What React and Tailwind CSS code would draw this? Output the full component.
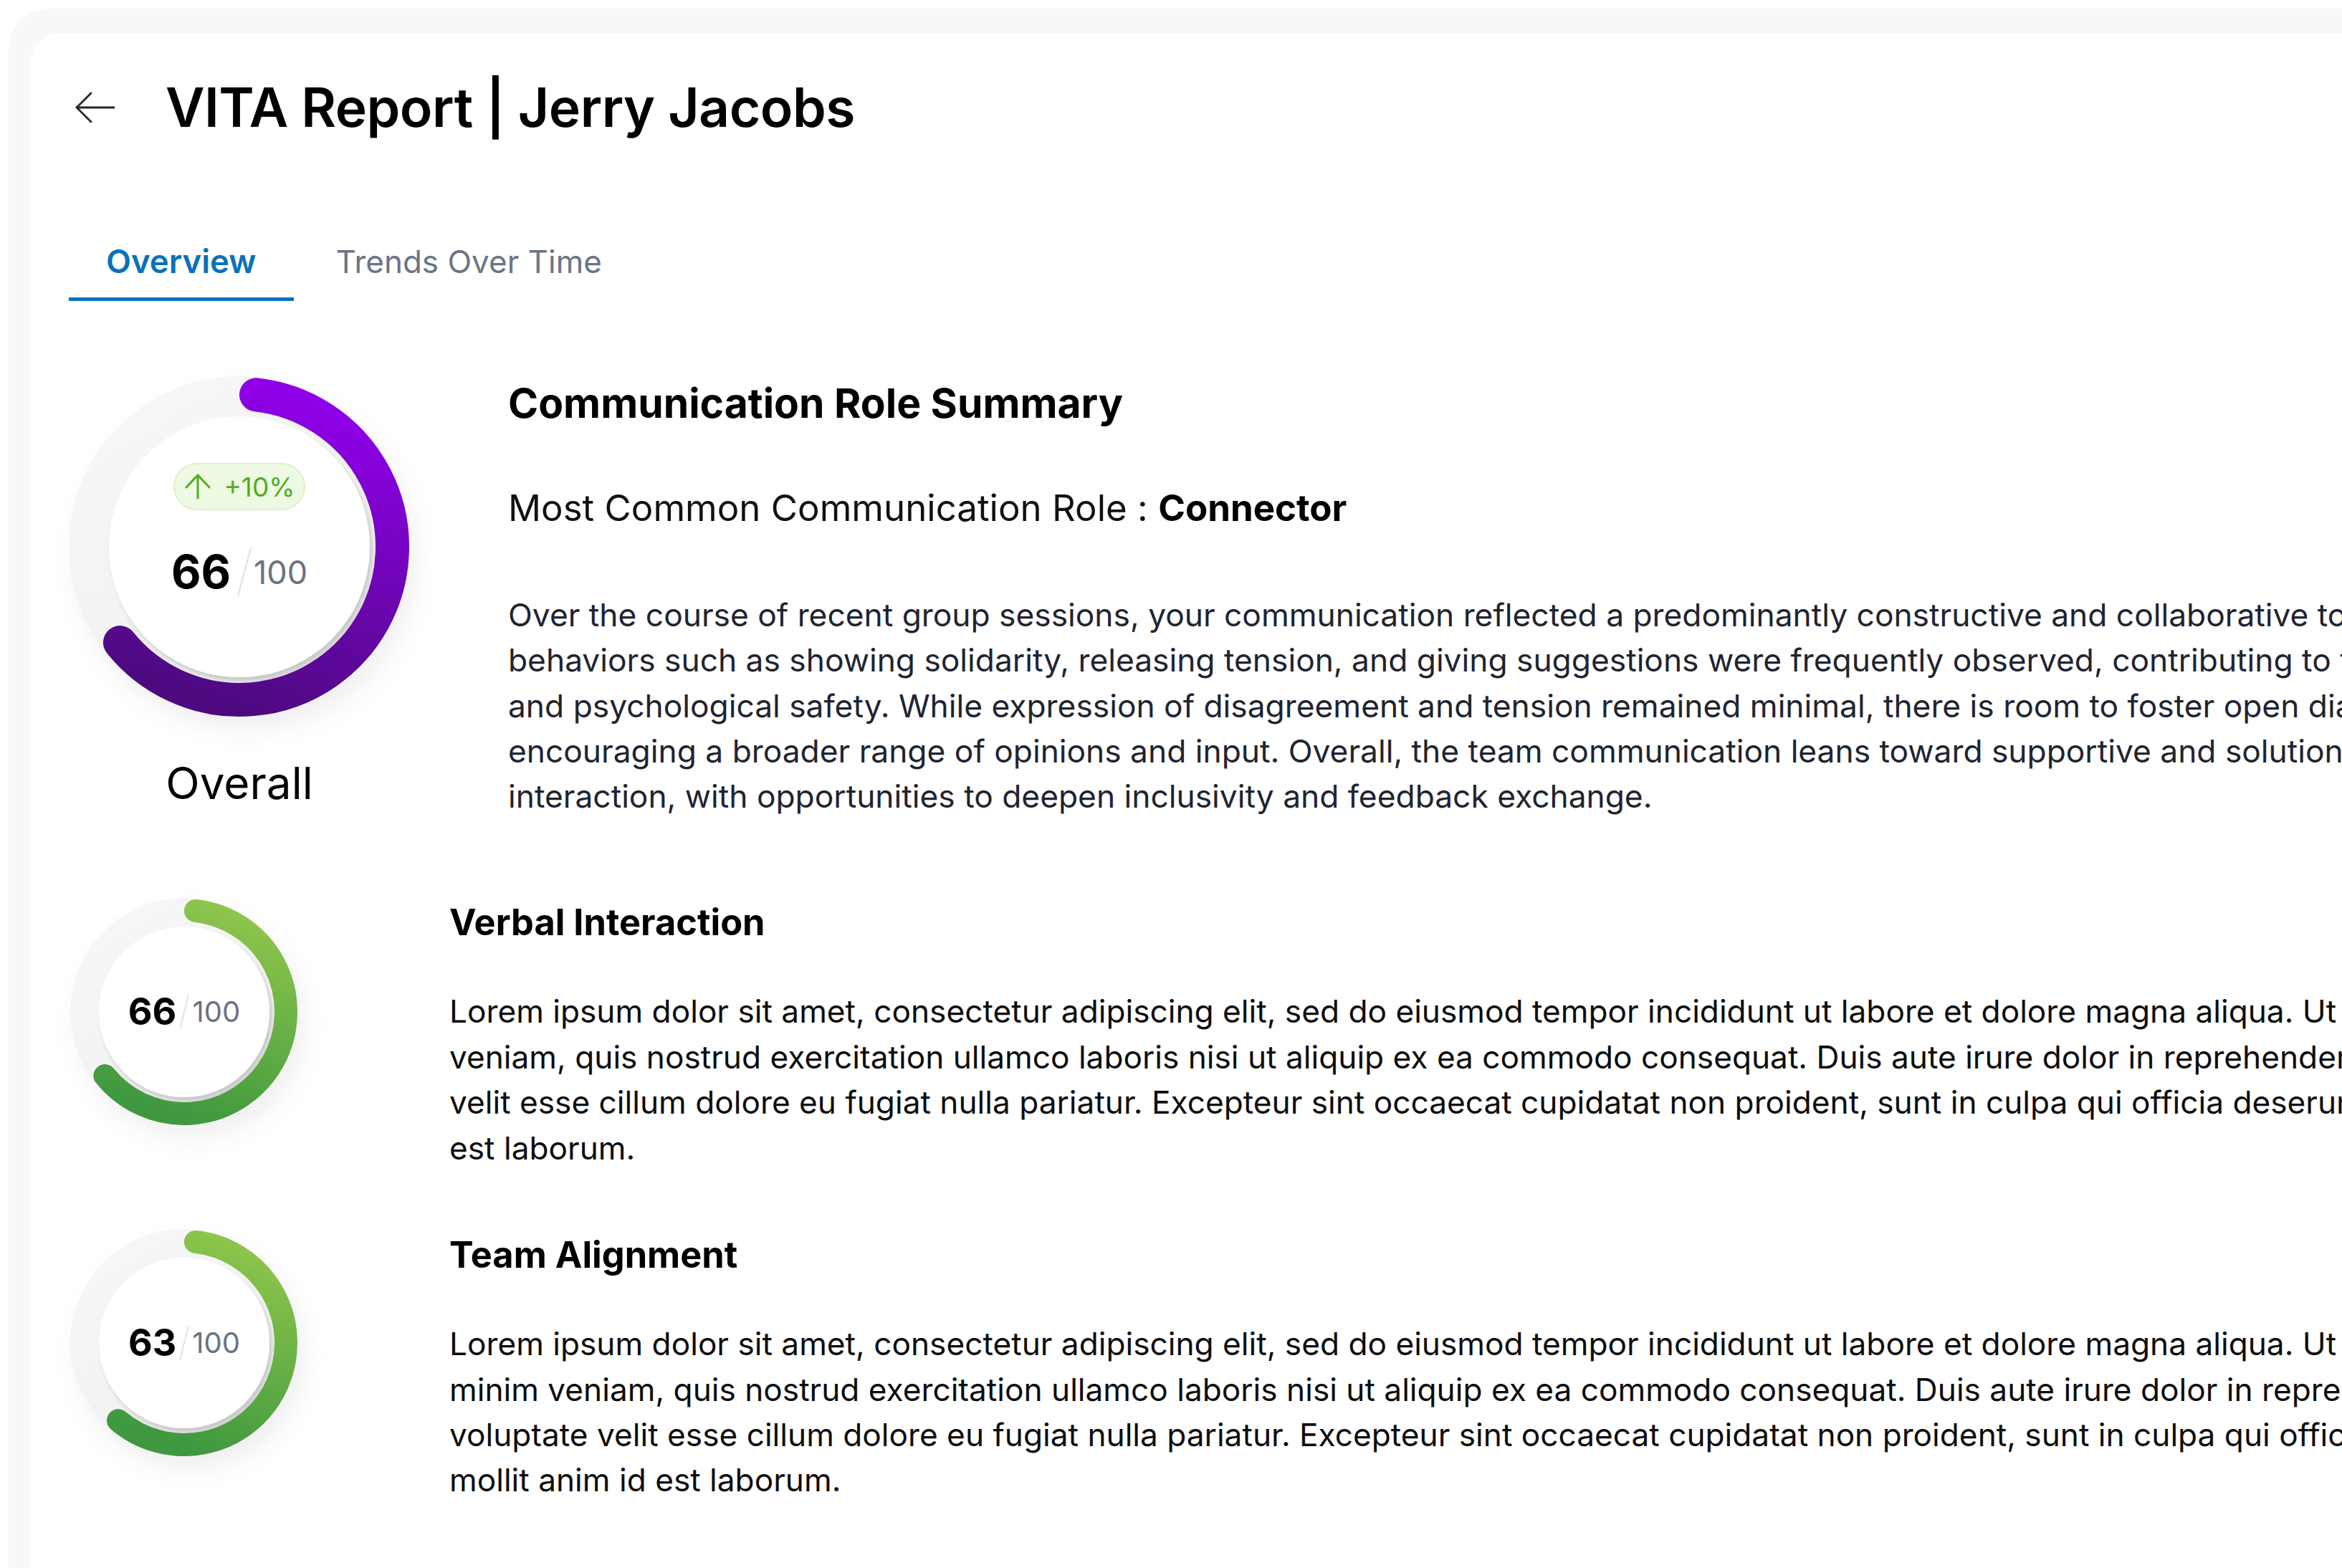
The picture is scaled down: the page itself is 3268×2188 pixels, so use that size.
import React from "react";

function polar(cx, cy, r, deg) {
  const rad = ((deg - 90) * Math.PI) / 180;
  return [cx + r * Math.cos(rad), cy + r * Math.sin(rad)];
}

function arcPath(cx, cy, r, a0, a1) {
  const [x1, y1] = polar(cx, cy, r, a0);
  const [x2, y2] = polar(cx, cy, r, a1);
  const large = a1 - a0 > 180 ? 1 : 0;
  return `M ${x1} ${y1} A ${r} ${r} 0 ${large} 1 ${x2} ${y2}`;
}

function Gauge({ id, size, stroke, gap, pct, from, to, boxClass, children }) {
  const R = size / 2;
  const rc = R - stroke / 2 - 1;
  const rDisc = R - stroke - gap - 1;
  const capDeg = ((stroke / 2) / rc) * (180 / Math.PI);
  const d = arcPath(R, R, rc, capDeg, pct * 360 - capDeg);
  return (
    <div className={`relative shrink-0 ${boxClass}`}>
      <svg
        width={size}
        height={size}
        viewBox={`0 0 ${size} ${size}`}
        className="absolute inset-0 overflow-visible"
      >
        <defs>
          <linearGradient id={`arc-${id}`} x1="0.65" y1="0" x2="0.35" y2="1">
            <stop offset="0" stopColor={from} />
            <stop offset="1" stopColor={to} />
          </linearGradient>
          <linearGradient id={`trk-${id}`} x1="0.2" y1="0" x2="0.8" y2="1">
            <stop offset="0" stopColor="#f7f7f7" />
            <stop offset="1" stopColor="#efefef" />
          </linearGradient>
          <filter id={`halo-${id}`} x="-40%" y="-40%" width="180%" height="180%">
            <feDropShadow dx="10" dy="18" stdDeviation="16" floodColor="#000" floodOpacity="0.06" />
          </filter>
          <filter id={`disc-${id}`} x="-30%" y="-30%" width="160%" height="160%">
            <feDropShadow dx="4" dy="6" stdDeviation="3" floodColor="#000" floodOpacity="0.17" />
          </filter>
        </defs>
        <circle cx={R} cy={R} r={R} fill={`url(#trk-${id})`} filter={`url(#halo-${id})`} />
        <circle cx={R} cy={R} r={rDisc} fill="#ffffff" filter={`url(#disc-${id})`} />
        <path
          d={d}
          fill="none"
          stroke={`url(#arc-${id})`}
          strokeWidth={stroke}
          strokeLinecap="round"
        />
      </svg>
      {children}
    </div>
  );
}

function SmallScore({ value }) {
  return (
    <div className="absolute inset-0 flex items-center justify-center">
      <div className="flex items-center">
        <span className="text-[52px] font-bold leading-none text-black">{value}</span>
        <span className="mx-[10px] h-[48px] w-[2px] rotate-[14deg] bg-[#e3e3e3]" />
        <span className="text-[40px] leading-none text-[#6b7280]">100</span>
      </div>
    </div>
  );
}

export default function App() {
  return (
    <div className="relative h-[2188px] w-[3268px] overflow-hidden bg-white font-['Inter',sans-serif] text-black">
      <div className="ml-[12px] mt-[12px] h-[2400px] w-[3500px] rounded-tl-[56px] bg-[#f8f8f8] pl-[31px] pt-[34px]">
        <div className="h-full rounded-tl-[40px] bg-white pl-[53px] pt-[57px]">
          {/* Header */}
          <div className="flex h-[94px] items-center">
            <svg
              width="56"
              height="44"
              viewBox="0 0 56 44"
              className="ml-[9px]"
              fill="none"
              stroke="#23272b"
              strokeWidth="2.8"
              strokeLinecap="round"
              strokeLinejoin="round"
            >
              <path d="M22 2 L2 22 L22 42" />
              <path d="M2 22 H54" />
            </svg>
            <h1 className="ml-[70px] whitespace-nowrap text-[75px] font-semibold leading-[94px] tracking-[-0.5px] text-black">
              VITA Report | Jerry Jacobs
            </h1>
          </div>

          {/* Tabs */}
          <div className="mt-[140px] flex gap-[7px]">
            <div className="border-b-[5px] border-[#0b72bd] px-[52px] pb-[22px] text-[45.5px] font-semibold leading-[56px] text-[#0a71b8]">
              Overview
            </div>
            <div className="px-[52px] pb-[22px] text-[44px] leading-[56px] text-[#697586]">
              Trends Over Time
            </div>
          </div>

          {/* Overall section */}
          <div className="mt-[105px] flex items-start">
            <div className="flex w-[476px] shrink-0 flex-col items-center">
              <Gauge
                id="overall"
                size={476}
                stroke={47}
                gap={8}
                pct={0.66}
                from="#8f00e8"
                to="#4d0a80"
                boxClass="h-[476px] w-[476px]"
              >
                <div className="absolute inset-0 flex flex-col items-center justify-center pb-[47px]">
                  <div className="flex h-[66px] items-center rounded-full border-2 border-[#dcf0c9] bg-[#eef9e3] pl-[14px] pr-[12px]">
                    <svg
                      width="36"
                      height="36"
                      viewBox="0 0 36 36"
                      fill="none"
                      stroke="#4fae1c"
                      strokeWidth="3"
                      strokeLinecap="round"
                      strokeLinejoin="round"
                    >
                      <path d="M18 2 V34" />
                      <path d="M2 19 L18 2 L34 19" />
                    </svg>
                    <span className="ml-[18px] text-[37px] leading-none text-[#4fae1c]">+10%</span>
                  </div>
                  <div className="mt-[51px] flex h-[70px] items-center">
                    <span className="text-[64px] font-bold leading-none text-black">66</span>
                    <span className="ml-[18px] mr-[12px] h-[70px] w-[2px] rotate-[15deg] bg-[#e0e0e0]" />
                    <span className="text-[45px] leading-none text-[#6b7280]">100</span>
                  </div>
                </div>
              </Gauge>
              <div className="mt-[54px] text-[62px] leading-[75px] text-black">Overall</div>
            </div>

            <div className="ml-[137px] pt-[3px]">
              <h2 className="whitespace-nowrap text-[57px] font-bold leading-[70px] text-black">
                Communication Role Summary
              </h2>
              <p className="mt-[81px] whitespace-nowrap text-[51px] leading-[60px] text-[#111111]">
                Most Common Communication Role : <span className="font-bold text-black">Connector</span>
              </p>
              <p className="mt-[88px] whitespace-nowrap text-[44.3px] leading-[63.3px] text-[#1f2430]">
                Over the course of recent group sessions, your communication reflected a predominantly constructive and collaborative tone. Positive
                <br />
                behaviors such as showing solidarity, releasing tension, and giving suggestions were frequently observed, contributing to the group&apos;s cohesion
                <br />
                and psychological safety. While expression of disagreement and tension remained minimal, there is room to foster open dialogue by
                <br />
                encouraging a broader range of opinions and input. Overall, the team communication leans toward supportive and solution-oriented
                <br />
                interaction, with opportunities to deepen inclusivity and feedback exchange.
              </p>
            </div>
          </div>

          {/* Verbal Interaction */}
          <div className="mt-[110px] flex items-start">
            <Gauge
              id="verbal"
              size={318}
              stroke={32}
              gap={7}
              pct={0.66}
              from="#8cc54b"
              to="#3f983f"
              boxClass="ml-[2px] h-[318px] w-[318px]"
            >
              <SmallScore value="66" />
            </Gauge>
            <div className="ml-[211px] pt-[2px]">
              <h3 className="whitespace-nowrap text-[50.5px] font-bold leading-[64px] text-black">Verbal Interaction</h3>
              <p className="mt-[61px] whitespace-nowrap text-[44.2px] leading-[63.4px] text-[#0d0d0d]">
                Lorem ipsum dolor sit amet, consectetur adipiscing elit, sed do eiusmod tempor incididunt ut labore et dolore magna aliqua. Ut enim ad minim
                <br />
                veniam, quis nostrud exercitation ullamco laboris nisi ut aliquip ex ea commodo consequat. Duis aute irure dolor in reprehenderit in voluptate
                <br />
                velit esse cillum dolore eu fugiat nulla pariatur. Excepteur sint occaecat cupidatat non proident, sunt in culpa qui officia deserunt mollit anim id
                <br />
                est laborum.
              </p>
            </div>
          </div>

          {/* Team Alignment */}
          <div className="mt-[85px] flex items-start">
            <Gauge
              id="team"
              size={318}
              stroke={32}
              gap={7}
              pct={0.63}
              from="#8cc54b"
              to="#3f983f"
              boxClass="ml-[2px] -mt-[4px] h-[318px] w-[318px]"
            >
              <SmallScore value="63" />
            </Gauge>
            <div className="ml-[211px]">
              <h3 className="whitespace-nowrap text-[50.5px] font-bold leading-[64px] text-black">Team Alignment</h3>
              <p className="mt-[61px] whitespace-nowrap text-[44.2px] leading-[63.4px] text-[#0d0d0d]">
                Lorem ipsum dolor sit amet, consectetur adipiscing elit, sed do eiusmod tempor incididunt ut labore et dolore magna aliqua. Ut enim ad
                <br />
                minim veniam, quis nostrud exercitation ullamco laboris nisi ut aliquip ex ea commodo consequat. Duis aute irure dolor in reprehenderit in
                <br />
                voluptate velit esse cillum dolore eu fugiat nulla pariatur. Excepteur sint occaecat cupidatat non proident, sunt in culpa qui officia deserunt
                <br />
                mollit anim id est laborum.
              </p>
            </div>
          </div>
        </div>
      </div>
    </div>
  );
}
